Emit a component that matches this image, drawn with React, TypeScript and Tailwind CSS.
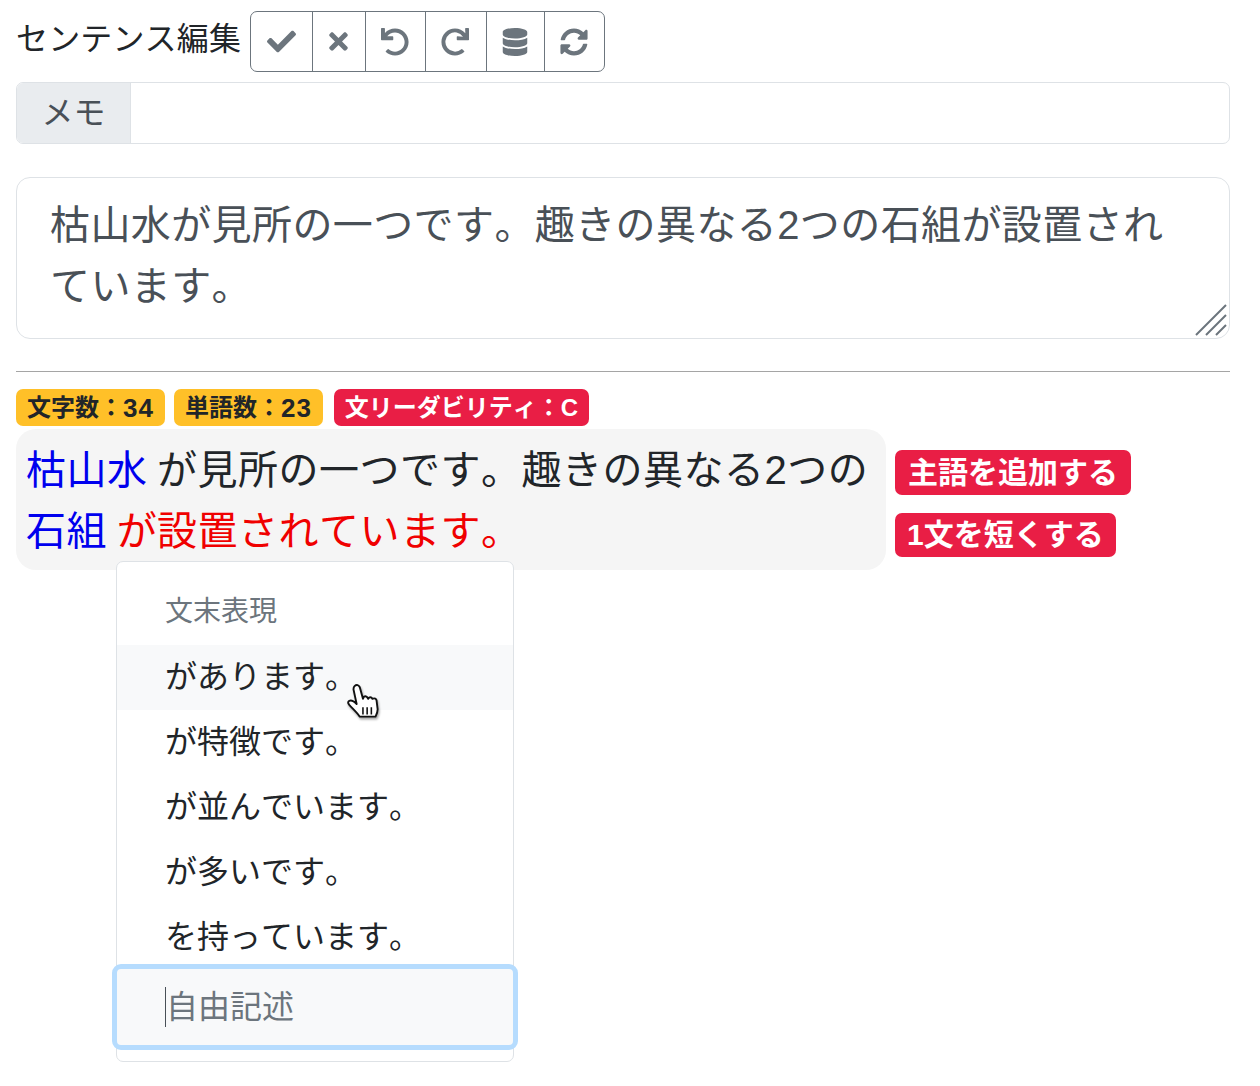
import { FaCheck, FaDatabase, FaRedo, FaSyncAlt, FaTimes, FaUndo } from "react-icons/fa";

const TOOLS = [
  { icon: FaCheck, w: "w-[61px]", size: 29 },
  { icon: FaTimes, w: "w-[53px]", size: 27 },
  { icon: FaUndo, w: "w-[60px]", size: 28 },
  { icon: FaRedo, w: "w-[61px]", size: 28 },
  { icon: FaDatabase, w: "w-[58px]", size: 28 },
  { icon: FaSyncAlt, w: "w-[60px]", size: 28 },
];

const ENDINGS = ["があります。", "が特徴です。", "が並んでいます。", "が多いです。", "を持っています。"];

function HandCursor() {
  return (
    <svg width="38" height="42" viewBox="0 0 36 40" className="absolute left-[228px] top-[120px] drop-shadow-[1px_2px_1px_rgba(0,0,0,0.35)]">
      <path
        d="M9 4c2-2 4-1 5 1l3 11 1-2c2-1 3 0 4 2 1-2 3-2 4 0 2-1 4 0 4 2l1 8c0 3-1 5-2 7H14c-2-3-5-6-9-10-2-2-3-4-1-5 2-1 4 0 7 3L8 7c0-1 0-2 1-3z"
        fill="#fff"
        stroke="#111"
        strokeWidth="1.8"
        strokeLinejoin="round"
      />
      <path d="M17 24v7M21 24v7M25 24v7" stroke="#111" strokeWidth="1.5" />
    </svg>
  );
}

export default function App() {
  return (
    <div className="relative h-[1086px] bg-white pl-4 pr-[30px] pt-[11px] font-['Liberation_Sans','Noto_Sans_CJK_JP',sans-serif] text-[#212529] [font-kerning:none]">
      <div className="flex items-center">
        <span className="mr-[9px] mt-[-5px] text-[32px] leading-[60px] tracking-[0.15px]">センテンス編集</span>
        <div className="flex h-[61px] overflow-hidden rounded-[7px] border border-[#6c757d]">
          {TOOLS.map((t, i) => (
            <button key={i} className={`${t.w} flex items-center justify-center border-[#6c757d] text-[#6c757d] ${i > 0 ? "border-l pr-[2px]" : ""}`}>
              <t.icon size={t.size} />
            </button>
          ))}
        </div>
      </div>

      <div className="mt-[10px] flex h-[62px] overflow-hidden rounded-[7px] border border-[#dee2e6]">
        <div className="flex w-[114px] items-center justify-center border-r border-[#dee2e6] bg-[#e9ecef] text-[32px] text-[#495057]">メモ</div>
        <input className="flex-1 outline-none" />
      </div>

      <div className="relative mt-[33px] h-[162px]">
        <textarea
          className="h-full w-full resize-none rounded-[14px] border border-[#dee2e6] pl-[33px] pr-[40px] pt-[17px] text-[40px] leading-[61px] tracking-[0.4px] text-[#495057] outline-none"
          defaultValue="枯山水が見所の一つです。趣きの異なる2つの石組が設置されています。"
        />
        <svg width="34" height="34" viewBox="0 0 34 34" className="absolute bottom-[2px] right-[2px]">
          <path d="M2 32 32 2M12 32 32 12M22 32 32 22" stroke="#6c757d" strokeWidth="2" />
        </svg>
      </div>

      <hr className="mt-[32px] border-t border-[#a5a5a5]" />

      <div className="mt-[17px] flex gap-[9px] text-[24px] font-bold leading-none">
        <span className="flex h-[37px] items-center rounded-[7px] bg-[#ffc028] px-[11px] text-[#212529]">
          文字数：<span className="text-[26px] tracking-[1px]">34</span>
        </span>
        <span className="flex h-[37px] items-center rounded-[7px] bg-[#ffc028] px-[11px] text-[#212529]">
          単語数：<span className="text-[26px] tracking-[1px]">23</span>
        </span>
        <span className="ml-[2px] flex h-[37px] items-center rounded-[7px] bg-[#e91e45] px-[11px] text-white">文リーダビリティ：C</span>
      </div>

      <div className="mt-[3px] flex">
        <div className="h-[141px] w-[870px] rounded-[20px] bg-[#f5f5f5] px-[10px] pt-[11px] text-[40px] leading-[61px] tracking-[0.5px] [word-spacing:-2px]">
          <span className="text-[#0000ee]">枯山水</span> が見所の一つです。趣きの異なる2つの
          <br />
          <span className="text-[#0000ee]">石組</span> <span className="text-[#f00000]">が設置されています。</span>
        </div>
        <div className="ml-[9px] flex flex-col items-start gap-[18px] pt-[21px] text-[30px] font-bold leading-none text-white">
          <span className="flex h-[45px] items-center rounded-[7px] bg-[#e91e45] px-[13px]">主語を追加する</span>
          <span className="flex h-[44px] items-center rounded-[7px] bg-[#e91e45] px-[12px]">1文を短くする</span>
        </div>
      </div>

      <div className="absolute left-[116px] top-[561px] h-[501px] w-[398px] rounded-[7px] border border-[#dee2e6] bg-white text-[32px] leading-[64px]">
        <div className="flex h-[83px] items-center px-[48px] pt-[16px] text-[28px] text-[#6c757d]">文末表現</div>
        {ENDINGS.map((e, i) => (
          <div key={e} className={`h-[65px] px-[48px] ${i === 0 ? "bg-[#f8f9fa]" : ""}`}>{e}</div>
        ))}
        <HandCursor />
        <div className="absolute left-[-5px] top-[402px] h-[86px] w-[406px] rounded-[9px] border-[5px] border-[#b6dcfe] bg-[#f8f9fa]">
          <input placeholder="自由記述" className="h-full w-full bg-transparent pl-[49px] text-[32px] outline-none placeholder:text-[#6c757d]" />
          <span className="absolute left-[48px] top-[18px] h-[40px] w-px bg-[#495057]" />
        </div>
      </div>
    </div>
  );
}
